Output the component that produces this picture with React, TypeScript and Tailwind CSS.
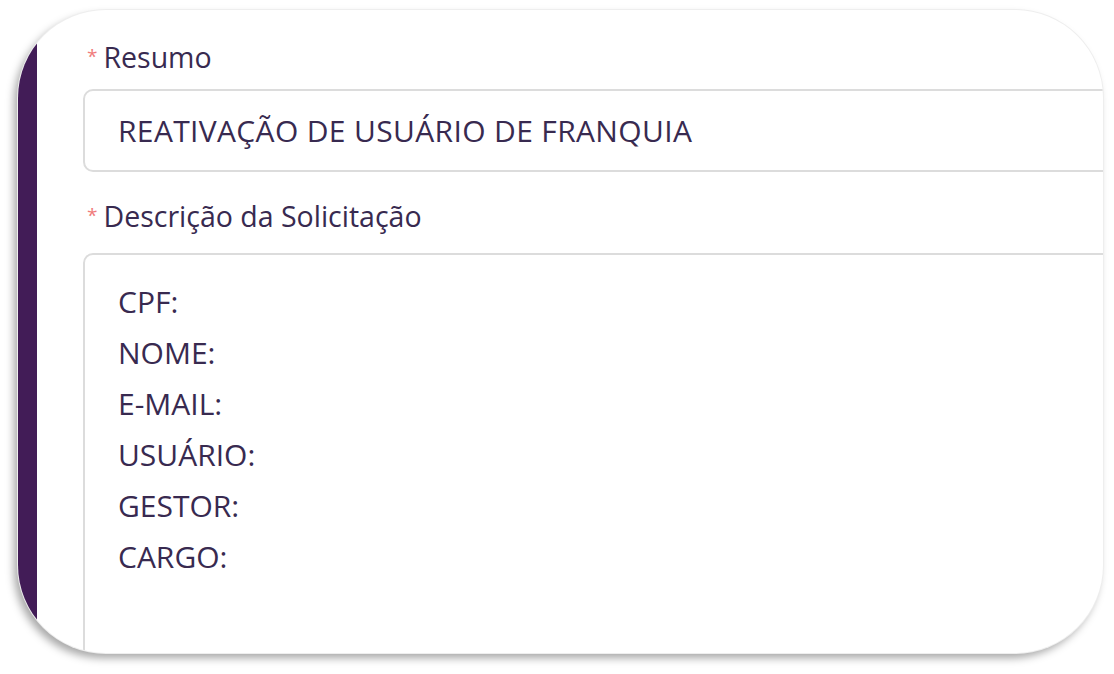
import React from "react";

const font = { fontFamily: '"Open Sans", "Noto Sans", sans-serif' };

function Label({ text }: { text: string }) {
  return (
    <div className="flex items-start h-[40px] leading-[40px] text-[28.5px] text-[#382a50]">
      <span className="text-[#f07b7b] text-[19px] leading-[19px] mt-[10px] ml-[4px] mr-[6px]">*</span>
      <span>{text}</span>
    </div>
  );
}

export default function App() {
  const lines = ["CPF:", "NOME:", "E-MAIL:", "USUÁRIO:", "GESTOR:", "CARGO:"];
  return (
    <div className="w-[1114px] h-[674px] bg-white pt-[10px] pl-[18px]" style={font}>
      <div className="w-[1085px] h-[643px] rounded-[88px] overflow-hidden flex bg-white shadow-[0_0_0_1px_#eeeeee,-4px_5px_8px_rgba(0,0,0,0.35)]">
        <div className="w-[19px] shrink-0 bg-[#421c57]" />
        <div className="flex-1 min-w-0 pl-[46px] pt-[27px] flex flex-col">
          <Label text="Resumo" />
          <div className="mt-[12px] w-[1060px] h-[83px] shrink-0 border-2 border-[#dcdcdc] rounded-[10px] flex items-center pl-[33px] text-[30px] tracking-[0.35px] text-[#382a50]">
            REATIVAÇÃO DE USUÁRIO DE FRANQUIA
          </div>
          <div className="mt-[24px]">
            <Label text="Descrição da Solicitação" />
          </div>
          <div className="mt-[17px] w-[1060px] h-[500px] shrink-0 border-2 border-[#dcdcdc] rounded-[10px] pl-[33px] pt-[21px] text-[30px] text-[#382a50]">
            {lines.map((l) => (
              <div key={l} className="h-[51px] leading-[51px]">
                {l}
              </div>
            ))}
          </div>
        </div>
      </div>
    </div>
  );
}
